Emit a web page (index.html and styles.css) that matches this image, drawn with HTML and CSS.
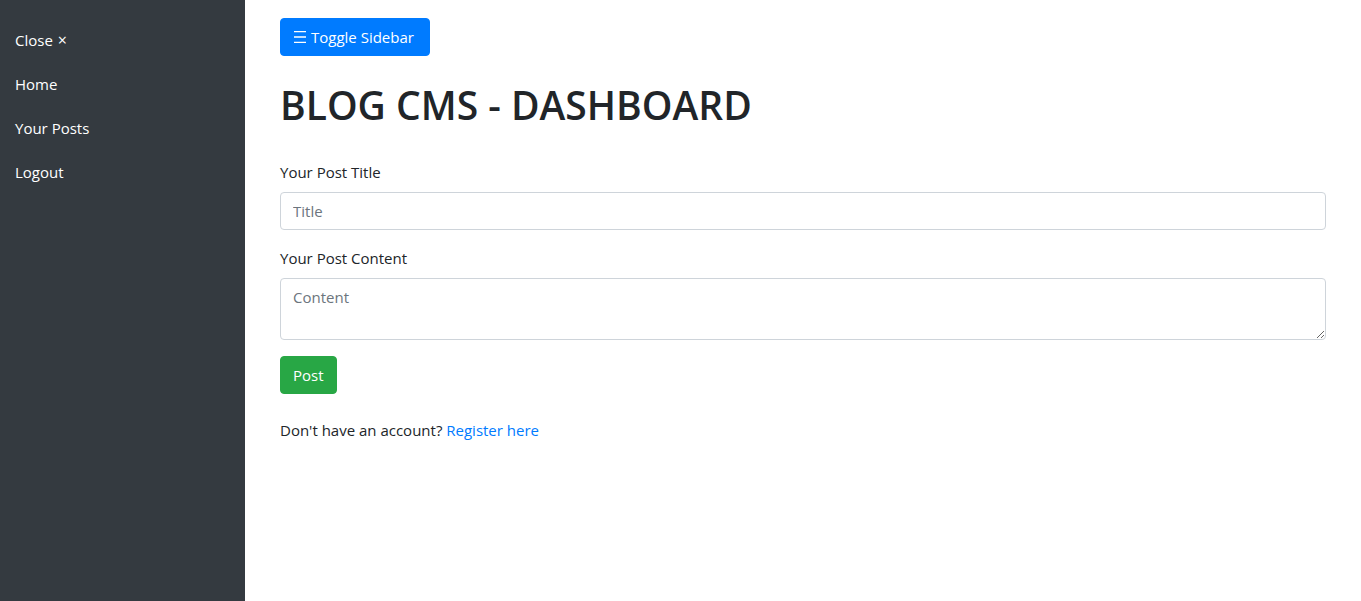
FILE: index.html
```
<!DOCTYPE html>
<html lang="en">
<head>
<meta charset="utf-8">
<title>Blog CMS - Dashboard</title>
<link rel="stylesheet" href="styles.css">
</head>
<body>
<div class="layout">
  <nav class="sidebar">
    <button type="button" class="sidebar-item">Close <span class="close-mark">×</span></button>
    <a class="sidebar-item" href="#">Home</a>
    <a class="sidebar-item" href="#">Your Posts</a>
    <a class="sidebar-item" href="#">Logout</a>
  </nav>
  <main class="content">
    <button type="button" class="btn btn-primary"><svg class="menu-icon" viewBox="0 0 14 14" aria-hidden="true"><path d="M1 1.6h12M1 7h12M1 12.4h12"/></svg>Toggle Sidebar</button>
    <h1 class="title">BLOG CMS - DASHBOARD</h1>
    <form class="post-form">
      <div class="field">
        <label for="title">Your Post Title</label>
        <input class="control" id="title" type="text" placeholder="Title">
      </div>
      <div class="field">
        <label for="body">Your Post Content</label>
        <textarea class="control" id="body" rows="2" placeholder="Content"></textarea>
      </div>
      <button type="submit" class="btn btn-success">Post</button>
    </form>
    <p class="register">Don't have an account? <a href="#">Register here</a></p>
  </main>
</div>
</body>
</html>
```
FILE: styles.css
```
*, *::before, *::after { box-sizing: border-box; }
body {
  margin: 0;
  font: 400 15px/24px "Segoe UI", "Open Sans", "Noto Sans", sans-serif;
  color: #212529;
  background: #fff;
}
button, input, textarea { font: inherit; margin: 0; }
a { color: #007bff; text-decoration: none; }
.layout { display: flex; min-height: 100vh; }
.sidebar {
  flex: none;
  width: 245px;
  padding-top: 20px;
  background: #343a40;
  display: flex;
  flex-direction: column;
}
.sidebar-item {
  padding: 8px 15px 12px;
  border: 0;
  background: none;
  color: #fff;
  text-align: left;
}
.close-mark { margin-left: 1px; font-size: 16px; line-height: 1; }
.content { flex: 1; min-width: 0; padding: 18px 35px; }
.btn {
  display: inline-flex;
  align-items: center;
  gap: 4px;
  padding: 6px 12px;
  border: 1px solid;
  border-radius: 4px;
  color: #fff;
}
.btn-primary { font-size: 15px; padding-right: 15px; background: #007bff; border-color: #007bff; }
.btn-success { background: #28a745; border-color: #28a745; }
.menu-icon { width: 14px; height: 14px; fill: none; stroke: currentColor; stroke-width: 1.3; }
.title { margin: 25px 0 31px; font-size: 39px; line-height: 48px; font-weight: 600; }
.field { margin-bottom: 16px; }
.field label { display: block; margin-bottom: 8px; }
.control {
  display: block;
  width: 100%;
  padding: 6px 12px;
  border: 1px solid #ced4da;
  border-radius: 4px;
  background: #fff;
  color: #495057;
}
.control::placeholder { color: #6c757d; opacity: 1; }
.register { margin: 24px 0 0; }
```
